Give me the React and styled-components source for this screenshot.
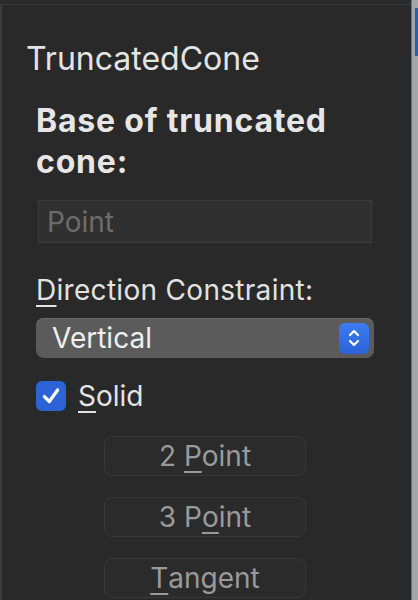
import React from 'react'
import styled, { createGlobalStyle } from 'styled-components'

const GlobalStyle = createGlobalStyle`
    html, body {
        margin     : 0;
        padding    : 0;
        background : #2a2a2a;
    }
    body {
        font-family : Inter, "Liberation Sans", Arial, sans-serif;
    }
`

const Window = styled.div`
    display    : flex;
    width      : 418px;
    height     : 600px;
    overflow   : hidden;
    background : #2a2a2a;
`

const Panel = styled.div`
    flex           : 1;
    display        : flex;
    flex-direction : column;
    border-left    : 2px solid #3c3c3c;
    border-top     : 1px solid #3a3a3a;
    margin-top     : 4px;
    padding        : 34px 39px 0 24px;
    background     : #292929;
`

const Title = styled.div`
    font-size   : 32px;
    line-height : 40px;
    color       : #e4e4e4;
`

const Heading = styled.div`
    margin-top     : 21px;
    margin-left    : 10px;
    font-size      : 32px;
    font-weight    : 700;
    letter-spacing : 0.8px;
    line-height    : 41px;
    color          : #e6e6e6;
`

const Field = styled.div`
    margin      : 18px 0 0 12px;
    height      : 41px;
    display     : flex;
    align-items : center;
    padding     : 0 8px;
    background  : #303030;
    border      : 1px solid #3c3c3c;
    font-size   : 28px;
    color       : #6c6c6c;
`

const Label = styled.div`
    margin-left    : 10px;
    margin-top     : 30px;
    font-size      : 28px;
    letter-spacing : 0.3px;
    line-height    : 34px;
    color          : #e2e2e2;
`

const U = styled.span`
    text-decoration           : underline;
    text-decoration-thickness : 2px;
    text-underline-offset     : 5px;
`

const Select = styled.div`
    margin          : 11px -2px 0 10px;
    height          : 40px;
    display         : flex;
    align-items     : center;
    justify-content : space-between;
    padding         : 0 5px 0 16px;
    background      : #5b5b5b;
    border-radius   : 8px;
    box-shadow      : 0 1px 0 #6a6a6a inset;
    font-size       : 28px;
    color           : #efefef;
`

const Stepper = styled.div`
    width           : 30px;
    height          : 31px;
    display         : flex;
    align-items     : center;
    justify-content : center;
    border-radius   : 6px;
    background      : linear-gradient(#3b7cf0, #2a63d8);
`

const CheckRow = styled.label`
    display     : flex;
    align-items : center;
    gap         : 12px;
    margin-left : 10px;
    margin-top  : 21px;
    font-size   : 28px;
    color       : #e4e4e4;
`

const Box = styled.span`
    width           : 30px;
    height          : 30px;
    display         : flex;
    align-items     : center;
    justify-content : center;
    border-radius   : 6px;
    background      : #2c64d8;
`

const Buttons = styled.div`
    display        : flex;
    flex-direction : column;
    align-items    : flex-start;
    gap            : 21px;
    margin-top     : 23px;
    padding-left   : 78px;
`

const Button = styled.div`
    width           : 202px;
    height          : 40px;
    display         : flex;
    align-items     : center;
    justify-content : center;
    box-sizing      : border-box;
    border          : 1px solid #383838;
    border-radius   : 8px;
    background      : #2b2b2b;
    font-size       : 28px;
    color           : #9a9a9a;
`

const Gutter = styled.div`
    width           : 6px;
    border-left     : 1px solid #6f7274;
    background      : #a2a6a8;
    display         : flex;
    justify-content : flex-end;
`

const Thumb = styled.div`
    width      : 3px;
    height     : 48px;
    margin-top : 8px;
    background : #2d5fa8;
`

export default function App() {
    return (
        <Window>
            <GlobalStyle />
            <Panel>
                <Title>TruncatedCone</Title>
                <Heading>Base of truncated<br />cone:</Heading>
                <Field>Point</Field>
                <Label><U>D</U>irection Constraint:</Label>
                <Select>
                    <span>Vertical</span>
                    <Stepper>
                        <svg width="14" height="22" viewBox="0 0 14 22" fill="none" stroke="#fff" strokeWidth="2.2" strokeLinecap="round" strokeLinejoin="round">
                            <polyline points="3,8 7,4 11,8" />
                            <polyline points="3,14 7,18 11,14" />
                        </svg>
                    </Stepper>
                </Select>
                <CheckRow>
                    <Box>
                        <svg width="22" height="22" viewBox="0 0 20 20" fill="none" stroke="#fff" strokeWidth="3" strokeLinecap="round" strokeLinejoin="round">
                            <polyline points="4,10.5 8.5,15 16,4.5" />
                        </svg>
                    </Box>
                    <span><U>S</U>olid</span>
                </CheckRow>
                <Buttons>
                    <Button>2&nbsp;<U>P</U>oint</Button>
                    <Button>3 P<U>o</U>int</Button>
                    <Button><U>T</U>angent</Button>
                </Buttons>
            </Panel>
            <Gutter>
                <Thumb />
            </Gutter>
        </Window>
    )
}
